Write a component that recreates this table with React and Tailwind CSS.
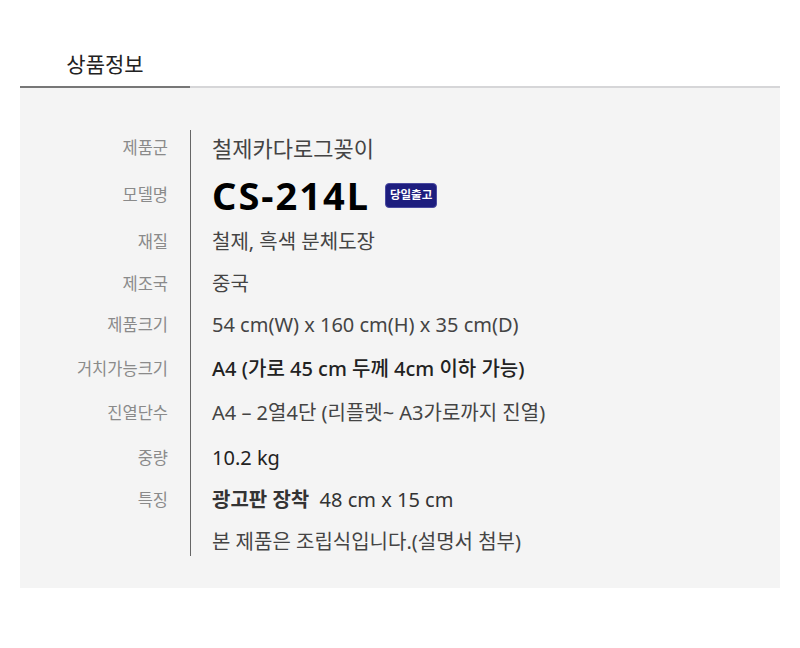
// Product info spec sheet
const rows = [
  { label: '제품군', value: '철제카다로그꽂이', pt: 'pt-[3px]', big: true },
  { label: '모델명', model: true, pt: 'pt-[17px]' },
  { label: '재질', value: '철제, 흑색 분체도장', pt: 'pt-[17px]' },
  { label: '제조국', value: '중국', pt: 'pt-[12px]' },
  { label: '제품크기', value: '54 cm(W) x 160 cm(H) x 35 cm(D)', pt: 'pt-[11px]' },
  { label: '거치가능크기', value: 'A4 (가로 45 cm 두께 4cm 이하 가능)', pt: 'pt-[14px]', strong: true },
  { label: '진열단수', value: 'A4 – 2열4단 (리플렛~ A3가로까지 진열)', pt: 'pt-[14px]' },
  { label: '중량', value: '10.2 kg', pt: 'pt-[15px]', dark: true },
  { label: '특징', feature: true, pt: 'pt-[12px]' },
  { label: '', value: '본 제품은 조립식입니다.(설명서 첨부)', pt: 'pt-[13px]', last: true },
];

export default function App() {
  return (
    <div className="w-[800px] h-[648px] bg-white px-5 pt-[50px] font-['Noto_Sans','Noto_Sans_CJK_KR',sans-serif]">
      <div className="w-[170px] text-center text-[21px] leading-[28px] text-[#222] mb-2">상품정보</div>
      <div className="flex h-[2px]">
        <div className="w-[170px] bg-[#777]" />
        <div className="flex-1 bg-[#d6d6d8]" />
      </div>

      <div className="h-[500px] bg-[#f4f4f4] pt-[42px]">
        {rows.map((r) => (
          <div key={r.label + (r.value || '')} className="flex">
            <div className={`w-[148px] shrink-0 ${r.pt} flex items-center justify-end`}>
              <span className={`${r.last ? 'h-[28px]' : 'h-[30px]'} flex items-center text-[16.5px] text-[#8a8a8a]`}>{r.label}</span>
            </div>
            <div className={`ml-[22px] border-l border-[#666] pl-[21px] ${r.pt}`}>
              <div className={`${r.last ? 'h-[28px]' : 'h-[30px]'} flex items-center whitespace-nowrap leading-none`}>
                {r.model ? (
                  <div className="flex items-center gap-[15px]">
                    <span className="text-[38px] font-bold text-black tracking-[2px] leading-none">CS-214L</span>
                    <span className="h-[25px] px-[4px] rounded-[4px] bg-[#1d1d7e] border border-[#4a4aa0] text-white text-[11.5px] font-bold flex items-center">당일출고</span>
                  </div>
                ) : r.feature ? (
                  <span className="text-[20px] text-[#333]">
                    <span className="font-bold">광고판 장착</span>&nbsp; 48 cm x 15 cm
                  </span>
                ) : (
                  <span
                    className={`${r.big ? 'text-[22px] text-[#333]' : 'text-[20px]'} ${
                      r.strong ? 'text-[#222] font-medium' : r.dark ? 'text-[#222]' : 'text-[#444]'
                    }`}
                  >
                    {r.value}
                  </span>
                )}
              </div>
            </div>
          </div>
        ))}
      </div>
    </div>
  );
}
